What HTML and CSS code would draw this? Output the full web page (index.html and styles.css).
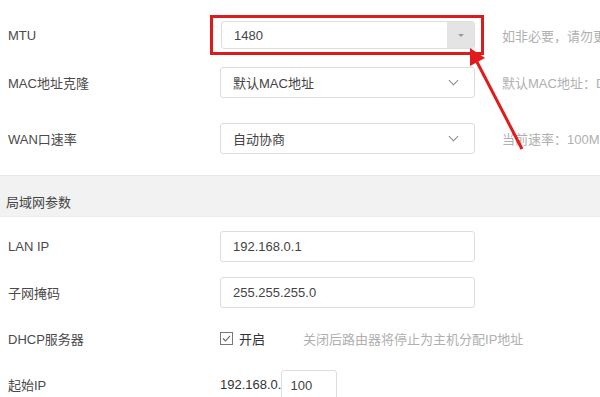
FILE: index.html
```html
<!DOCTYPE html>
<html>
<head>
    <meta charset="utf-8">
    <title>网络设置</title>
    <link rel="stylesheet" href="styles.css">
</head>
<body>
    <div id="page">
        <div class="row row-mtu">
            <div class="label">MTU</div>
            <div class="control">
                <div class="mark">
                    <div class="combo">
                        <span class="value">1480</span>
                        <span class="combo-btn"><span class="tri"></span></span>
                    </div>
                </div>
            </div>
            <div class="hint">如非必要，请勿更改</div>
        </div>
        <div class="row row-mac">
            <div class="label">MAC地址克隆</div>
            <div class="control">
                <div class="select">
                    <span class="value">默认MAC地址</span>
                    <span class="chev"></span>
                </div>
            </div>
            <div class="hint">默认MAC地址：D8:32:14:5A:0C:21</div>
        </div>
        <div class="row row-wan">
            <div class="label">WAN口速率</div>
            <div class="control">
                <div class="select">
                    <span class="value">自动协商</span>
                    <span class="chev"></span>
                </div>
            </div>
            <div class="hint">当前速率：100Mbps全双工</div>
        </div>

        <div class="section">局域网参数</div>

        <div class="row row-lan">
            <div class="label">LAN IP</div>
            <div class="control">
                <div class="input"><span class="value">192.168.0.1</span></div>
            </div>
        </div>
        <div class="row">
            <div class="label">子网掩码</div>
            <div class="control">
                <div class="input"><span class="value">255.255.255.0</span></div>
            </div>
        </div>
        <div class="row">
            <div class="label">DHCP服务器</div>
            <div class="control check-wrap">
                <span class="checkbox">
                    <svg width="13" height="13" viewBox="0 0 13 13">
                        <rect x="0.5" y="0.5" width="12" height="12" fill="#fff" stroke="#777"/>
                        <path d="M3 6.5 L5.5 9 L10 3.8" fill="none" stroke="#666" stroke-width="1.1"/>
                    </svg>
                </span>
                <span class="check-text">开启</span>
                <span class="hint hint-inline">关闭后路由器将停止为主机分配IP地址</span>
            </div>
        </div>
        <div class="row row-start">
            <div class="label">起始IP</div>
            <div class="control ip-wrap">
                <span class="ip-prefix">192.168.0.</span>
                <div class="input small"><span class="value">100</span></div>
            </div>
        </div>

        <!-- 标注箭头 -->
        <svg class="arrow" width="600" height="397" viewBox="0 0 600 397">
            <line x1="522" y1="149" x2="477" y2="62" stroke="#e11b1b" stroke-width="3"/>
            <polygon points="470,48 485,58 470,66" fill="#e11b1b"/>
        </svg>
    </div>
</body>
</html>
```

FILE: styles.css
```css
html, body {
    margin: 0;
    padding: 0;
    background: #fff;
    overflow: hidden;
}
body {
    font-family: "Liberation Sans", "Noto Sans CJK SC", sans-serif;
    font-size: 13px;
    color: #4a4a4a;
}
#page {
    position: relative;
    width: 600px;
    height: 397px;
    padding-top: 12px;
    box-sizing: border-box;
    overflow: hidden;
}
.row {
    display: flex;
    align-items: center;
    height: 46px;
    white-space: nowrap;
}
.row-mac {
    height: 48px;
}
.row-wan {
    height: 64px;
}
.label {
    width: 212px;
    padding-left: 8px;
    flex-shrink: 0;
}
.control {
    width: 282px;
    flex-shrink: 0;
}
.hint {
    color: #b0b0b0;
}
.mark {
    width: 274px;
    height: 40px;
    box-sizing: border-box;
    margin-left: -10px;
    border: 3px solid #dc1c1c;
    padding: 0 0 0 8px;
    display: flex;
    align-items: center;
}
.combo {
    width: 254px;
    height: 28px;
    border: 1px solid #ddd;
    border-radius: 3px;
    box-sizing: border-box;
    display: flex;
    align-items: center;
    justify-content: space-between;
    overflow: hidden;
}
.value {
    padding-left: 12px;
    color: #444;
}
.combo-btn {
    width: 27px;
    height: 100%;
    background: #e4e4e4;
    display: flex;
    align-items: center;
    justify-content: center;
}
.tri {
    width: 0;
    height: 0;
    border-left: 3px solid transparent;
    border-right: 3px solid transparent;
    border-top: 3px solid #999;
}
.select, .input {
    width: 255px;
    height: 31px;
    border: 1px solid #ddd;
    border-radius: 3px;
    box-sizing: border-box;
    display: flex;
    align-items: center;
    justify-content: space-between;
}
.chev {
    width: 6px;
    height: 6px;
    border-right: 1px solid #888;
    border-bottom: 1px solid #888;
    transform: rotate(45deg);
    margin-right: 17px;
    margin-top: -4px;
}
.section {
    margin-top: 5px;
    margin-bottom: 6px;
    height: 42px;
    box-sizing: border-box;
    padding: 16px 0 0 6px;
    line-height: 22px;
    background: #f2f2f2;
    border-top: 1px solid #e6e6e6;
    border-bottom: 1px solid #ececec;
    color: #444;
}
.check-wrap {
    display: flex;
    align-items: center;
    width: auto;
}
.checkbox {
    display: flex;
    margin-right: 6px;
}
.check-text {
    color: #333;
}
.hint-inline {
    margin-left: 38px;
}
.ip-wrap {
    display: flex;
    align-items: center;
}
.ip-prefix {
    color: #333;
}
.input.small {
    width: 56px;
    height: 30px;
    margin-top: 2px;
}
.input.small .value {
    padding-left: 8px;
}
.arrow {
    position: absolute;
    left: 0;
    top: 0;
    pointer-events: none;
}
```
